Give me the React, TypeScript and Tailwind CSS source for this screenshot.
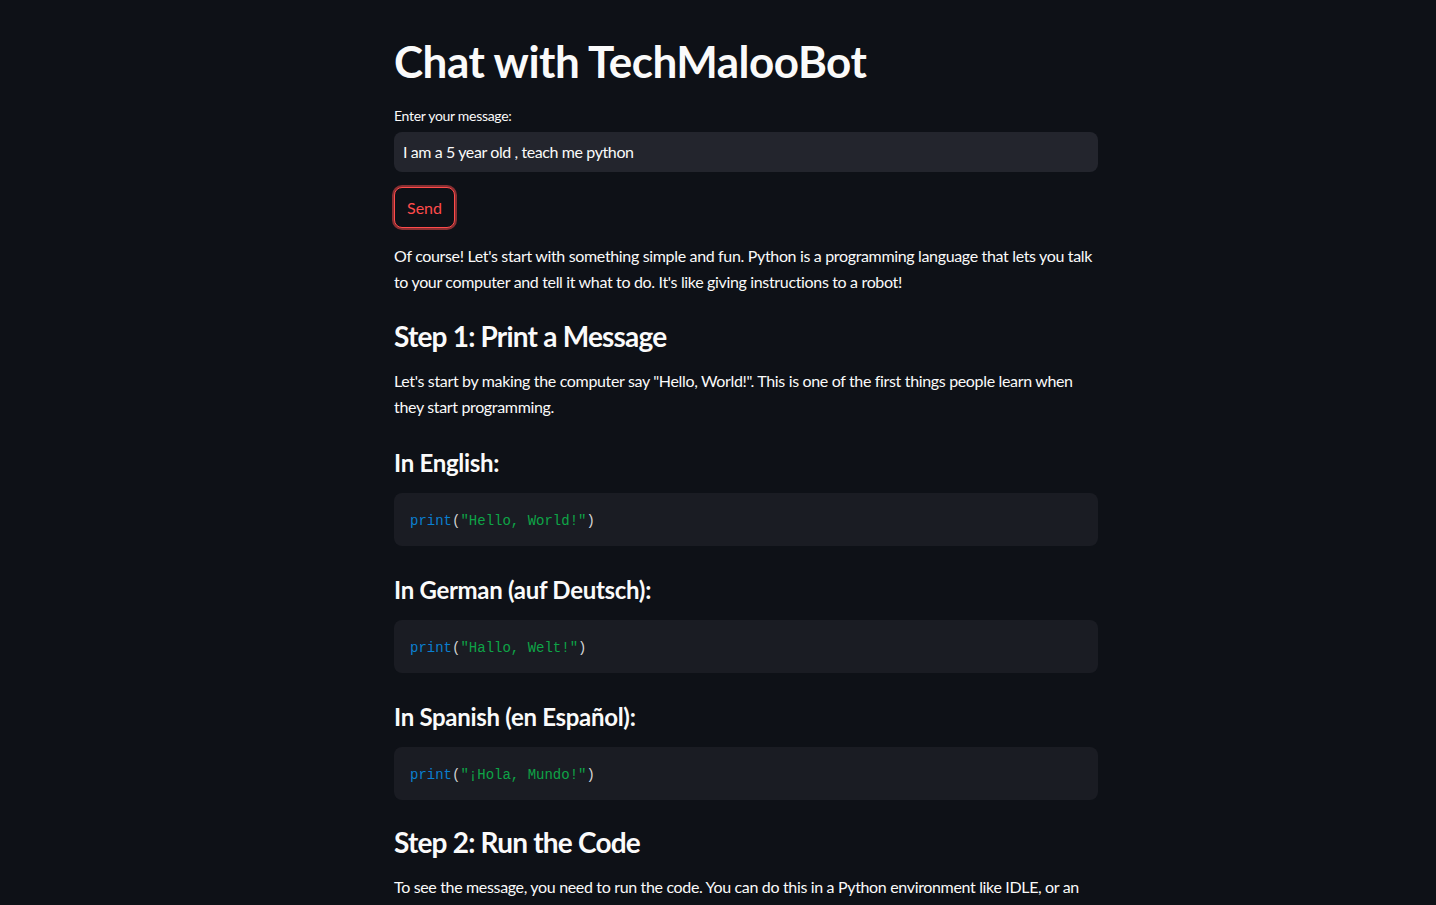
import React from "react";

const Code = ({ text }: { text: string }) => (
  <div className="mt-[16px] h-[53px] rounded-lg bg-[#1a1c23] px-4 pt-[3px] flex items-center">
    <code className="text-[14px] text-[#d4d4d4] tracking-normal" style={{ fontFamily: '"Liberation Mono", "DejaVu Sans Mono", monospace' }}>
      <span className="text-[#0a7fd0]">print</span>(<span className="text-[#0ea447]">{text}</span>)
    </code>
  </div>
);

export default function App() {
  return (
    <div className="min-h-screen bg-[#0e1117] text-[#fafafa] overflow-hidden" style={{ fontFamily: 'Lato, "Noto Sans", sans-serif' }}>
      <div className="w-[704px] ml-[394px] pt-[35px] pb-10">
        <h1 className="text-[44px] font-bold leading-[53px] tracking-[-0.5px]">Chat with TechMalooBot</h1>
        <div className="mt-[18px] text-[14px] leading-[20px] tracking-[-0.3px]">Enter your message:</div>
        <div className="mt-[6px] h-[40px] rounded-lg bg-[#23252d] px-[9px] flex items-center text-[16px] tracking-[-0.4px]">
          I am a 5 year old , teach me python
        </div>
        <button className="mt-[15px] h-[41px] px-[12px] rounded-lg border border-[#ff4b4b] text-[#ff4b4b] text-[16px] bg-[#0e1117] shadow-[0_0_0_2px_rgba(255,75,75,0.5)]">
          Send
        </button>
        <p className="mt-[15px] text-[16px] leading-[25.6px] tracking-[-0.34px]">
          Of course! Let's start with something simple and fun. Python is a programming language that lets you talk to your computer and tell it what to do. It's like giving instructions to a robot!
        </p>
        <h2 className="mt-[25px] text-[28px] font-bold leading-[34px] tracking-[-0.8px]">Step 1: Print a Message</h2>
        <p className="mt-[15px] text-[16px] leading-[25.6px] tracking-[-0.34px]">
          Let's start by making the computer say "Hello, World!". This is one of the first things people learn when they start programming.
        </p>
        <h3 className="mt-[29px] text-[24px] font-bold leading-[29px] tracking-[-0.3px]">In English:</h3>
        <Code text={'"Hello, World!"'} />
        <h3 className="mt-[29px] text-[24px] font-bold leading-[29px] tracking-[-0.3px]">In German (auf Deutsch):</h3>
        <Code text={'"Hallo, Welt!"'} />
        <h3 className="mt-[29px] text-[24px] font-bold leading-[29px] tracking-[-0.3px]">In Spanish (en Español):</h3>
        <Code text={'"¡Hola, Mundo!"'} />
        <h2 className="mt-[25px] text-[28px] font-bold leading-[34px] tracking-[-0.8px]">Step 2: Run the Code</h2>
        <p className="mt-[15px] text-[16px] leading-[25.6px] tracking-[-0.34px]">
          To see the message, you need to run the code. You can do this in a Python environment like IDLE, or an online Python editor.
        </p>
      </div>
    </div>
  );
}
